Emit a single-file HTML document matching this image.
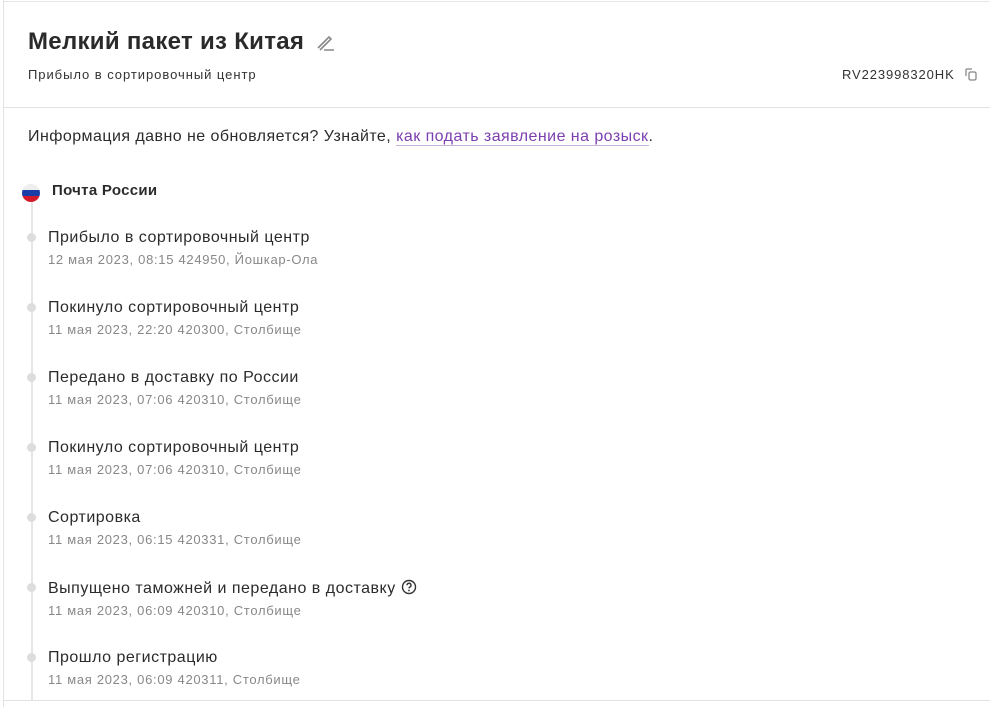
<!DOCTYPE html>
<html><head><meta charset="utf-8"><style>
body{margin:0;width:990px;height:707px;background:#fff;font-family:"Liberation Sans",sans-serif;color:#222;position:relative;overflow:hidden}
.a{position:absolute;white-space:nowrap}
.item .t{font-size:16px;color:#2b2b2b;letter-spacing:0.5px}
.item .d{font-size:13px;color:#888;margin-top:5px;letter-spacing:0.7px}
.dot{position:absolute;left:27px;width:9px;height:9px;border-radius:50%;background:#ddd}
</style></head><body>
<div class="a" style="left:3px;top:0;width:1px;height:707px;background:#e3e3e3"></div>
<div class="a" style="left:3px;top:1px;width:987px;height:1px;background:#e6e6e6"></div>
<div class="a" style="left:3px;top:107px;width:987px;height:1px;background:#e3e3e3"></div>
<div class="a" style="left:3px;top:700px;width:987px;height:1px;background:#e3e3e3"></div>
<div class="a" style="left:28px;top:28px;font-size:24px;font-weight:bold;color:#2a2a2a;letter-spacing:0.3px">Мелкий пакет из Китая</div>
<svg class="a" style="left:315px;top:33px" width="20" height="18" viewBox="0 0 20 18"><path d="M3 15 L14 4 L16 6 L5 17" fill="none" stroke="#888" stroke-width="1.6"/><line x1="9" y1="17" x2="19" y2="17" stroke="#888" stroke-width="1.5"/></svg>
<div class="a" style="left:28px;top:67px;font-size:13px;color:#333;letter-spacing:0.95px">Прибыло в сортировочный центр</div>
<div class="a" style="left:842px;top:67px;font-size:13px;color:#333;letter-spacing:0.9px">RV223998320HK</div>
<svg class="a" style="left:964px;top:67px" width="14" height="14" viewBox="0 0 14 14"><path d="M2 9V3a1 1 0 0 1 1-1h5" fill="none" stroke="#888" stroke-width="1.3"/><rect x="5" y="5" width="7" height="8" rx="1.5" fill="none" stroke="#888" stroke-width="1.3"/></svg>
<div class="a" style="left:28px;top:128px;font-size:16px;color:#2b2b2b;letter-spacing:0.45px">Информация давно не обновляется? Узнайте, <span style="color:#7b3fb0;border-bottom:1px solid #c8b2dc">как подать заявление на розыск</span>.</div>
<div class="a" style="left:31px;top:200px;width:2px;height:500px;background:#e6e6e6"></div>
<svg class="a" style="left:22px;top:184px" width="18" height="18" viewBox="0 0 18 18"><clipPath id="c"><circle cx="9" cy="9" r="9"/></clipPath><g clip-path="url(#c)"><rect width="18" height="6" fill="#eeeeee"/><rect y="6" width="18" height="6" fill="#1a3ea8"/><rect y="12" width="18" height="6" fill="#d21a2a"/></g></svg>
<div class="a" style="left:52px;top:182px;font-size:15px;font-weight:bold;color:#2b2b2b;letter-spacing:0.3px">Почта России</div>

<div class="dot" style="top:233px"></div><div class="a item" style="left:48px;top:229px"><div class="t">Прибыло в сортировочный центр</div><div class="d">12 мая 2023, 08:15 424950, Йошкар-Ола</div></div>
<div class="dot" style="top:303px"></div><div class="a item" style="left:48px;top:299px"><div class="t">Покинуло сортировочный центр</div><div class="d">11 мая 2023, 22:20 420300, Столбище</div></div>
<div class="dot" style="top:373px"></div><div class="a item" style="left:48px;top:369px"><div class="t">Передано в доставку по России</div><div class="d">11 мая 2023, 07:06 420310, Столбище</div></div>
<div class="dot" style="top:443px"></div><div class="a item" style="left:48px;top:439px"><div class="t">Покинуло сортировочный центр</div><div class="d">11 мая 2023, 07:06 420310, Столбище</div></div>
<div class="dot" style="top:513px"></div><div class="a item" style="left:48px;top:509px"><div class="t">Сортировка</div><div class="d">11 мая 2023, 06:15 420331, Столбище</div></div>
<div class="dot" style="top:583px"></div><div class="a item" style="left:48px;top:579px"><div class="t">Выпущено таможней и передано в доставку <svg width="16" height="16" viewBox="0 0 16 16" style="vertical-align:-2px"><circle cx="8" cy="8" r="6.5" fill="none" stroke="#333" stroke-width="1.4"/><path d="M6 6.3a2 2 0 1 1 2.8 1.8c-.6.3-.8.7-.8 1.3" fill="none" stroke="#333" stroke-width="1.4"/><circle cx="8" cy="11.5" r=".9" fill="#333"/></svg></div><div class="d">11 мая 2023, 06:09 420310, Столбище</div></div>
<div class="dot" style="top:653px"></div><div class="a item" style="left:48px;top:649px"><div class="t">Прошло регистрацию</div><div class="d">11 мая 2023, 06:09 420311, Столбище</div></div>
</body></html>
